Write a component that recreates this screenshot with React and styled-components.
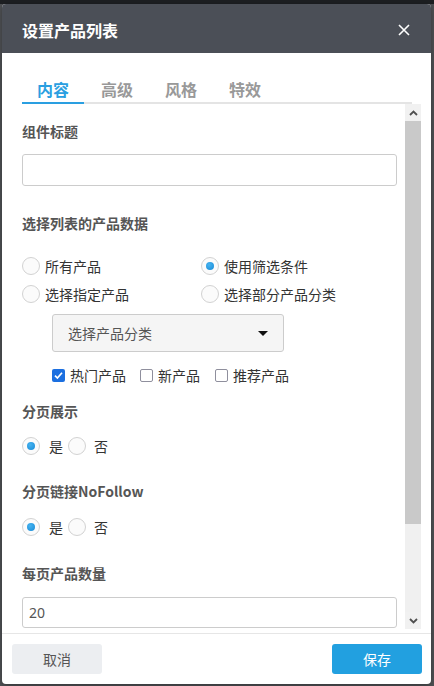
import React from "react";
import styled, { createGlobalStyle } from "styled-components";

const GlobalStyle = createGlobalStyle`
  * { box-sizing: border-box; }
  body {
    margin: 0;
    background: #4d4f52;
    font-family: "Noto Sans CJK SC", "Noto Sans", sans-serif;
  }
`;

const Backdrop = styled.div`
  width: 434px;
  height: 686px;
  padding: 4px 3px 2px 2px;
  background: linear-gradient(#1d1f22 0 4px, #505255 4px);
`;

const Modal = styled.div`
  width: 429px;
  height: 680px;
  background: #fff;
  border-radius: 4px;
  overflow: hidden;
  display: flex;
  flex-direction: column;
  box-shadow: 0 2px 6px rgba(0, 0, 0, 0.35);
`;

const Header = styled.div`
  height: 49px;
  flex: none;
  background: #4b4f57;
  display: flex;
  align-items: center;
  justify-content: space-between;
  padding: 2px 21px 0 20px;
`;

const Title = styled.h2`
  margin: 0;
  color: #fff;
  font-size: 16px;
  font-weight: 700;
  line-height: 22px;
`;

const CloseButton = styled.button`
  border: 0;
  padding: 0;
  background: none;
  width: 12px;
  height: 12px;
  display: flex;
  cursor: pointer;
`;

const TabList = styled.div`
  flex: none;
  display: flex;
  margin: 25px 19px 0 20px;
  border-bottom: 2px solid #e4e4e4;
`;

const Tab = styled.div`
  width: 62px;
  margin-right: 2px;
  text-align: center;
  font-size: 16px;
  font-weight: 700;
  line-height: 22px;
  padding-bottom: 2px;
  margin-bottom: -2px;
  color: ${(p) => (p.$active ? "#2a9fe1" : "#999")};
  border-bottom: 2px solid ${(p) => (p.$active ? "#2a9fe1" : "transparent")};
`;

const Body = styled.div`
  flex: 1;
  min-height: 0;
  display: flex;
  padding: 0 10px 0 20px;
  overflow: hidden;
`;

const Content = styled.div`
  flex: 1;
  margin-right: 8px;
  padding-top: 17px;
  overflow: hidden;
`;

const Scrollbar = styled.div`
  width: 16px;
  flex: none;
  display: flex;
  flex-direction: column;
  margin-bottom: 4px;
  background: #f0f0f0;
`;

const ScrollButton = styled.div`
  height: 17px;
  flex: none;
  display: flex;
  align-items: center;
  justify-content: center;
  background: #f1f1f1;
`;

const Thumb = styled.div`
  height: 403px;
  flex: none;
  background: #c9c9c9;
`;

const Track = styled.div`
  flex: 1;
`;

const Label = styled.div`
  margin-top: ${(p) => p.$mt || 0}px;
  font-size: 14px;
  font-weight: 700;
  line-height: 20px;
  color: #555;
`;

const TextInput = styled.div`
  margin-top: ${(p) => p.$mt || 0}px;
  height: ${(p) => p.$h || 32}px;
  border: 1px solid #ccc;
  border-radius: 3px;
  padding: 0 6px;
  display: flex;
  align-items: center;
  font-family: "Noto Sans", "Noto Sans CJK SC", sans-serif;
  font-size: 14px;
  color: #555;
`;

const RadioGrid = styled.div`
  margin-top: ${(p) => p.$mt || 0}px;
  display: grid;
  grid-template-columns: 179px 1fr;
  grid-auto-rows: 28px;
`;

const RadioRow = styled.div`
  margin-top: ${(p) => p.$mt || 0}px;
  height: 28px;
  display: flex;
  align-items: center;
`;

const Option = styled.label`
  display: flex;
  align-items: center;
  font-size: 14px;
  color: #333;
  margin-right: ${(p) => p.$mr || 0}px;
`;

const Radio = styled.span`
  width: 18px;
  height: 18px;
  flex: none;
  border-radius: 50%;
  border: 1px solid #d2d2d2;
  background: #fbfbfb;
  margin-right: ${(p) => p.$gap || 5}px;
  display: flex;
  align-items: center;
  justify-content: center;
  &::after {
    content: "";
    display: ${(p) => (p.$checked ? "block" : "none")};
    width: 8px;
    height: 8px;
    border-radius: 50%;
    background: radial-gradient(circle at 40% 35%, #45b3f0, #1789d6);
  }
`;

const Select = styled.div`
  margin: 6px 0 0 30px;
  width: 232px;
  height: 38px;
  border: 1px solid #ccc;
  border-radius: 3px;
  background: #f5f5f5;
  display: flex;
  align-items: center;
  justify-content: space-between;
  padding: 0 15px 0 15px;
  font-size: 14px;
  color: #555;
`;

const Caret = styled.span`
  width: 0;
  height: 0;
  border-left: 5px solid transparent;
  border-right: 5px solid transparent;
  border-top: 5px solid #111;
`;

const CheckRow = styled.div`
  margin: 13px 0 0 30px;
  height: 20px;
  display: flex;
  align-items: center;
`;

const Box = styled.span`
  width: 13px;
  height: 13px;
  flex: none;
  border-radius: 2px;
  margin-right: 5px;
  display: flex;
  align-items: center;
  justify-content: center;
  border: ${(p) => (p.$checked ? "none" : "1.5px solid #8f8f9d")};
  background: ${(p) => (p.$checked ? "#1b6fe0" : "#fff")};
`;

const Footer = styled.div`
  flex: none;
  border-top: 1px solid #e6e6e6;
  padding: 10px 9px 10px 10px;
  display: flex;
  justify-content: space-between;
`;

const Button = styled.button`
  width: 90px;
  height: 30px;
  border: 0;
  border-radius: 3px;
  font-family: inherit;
  font-size: 14px;
  background: ${(p) => (p.$primary ? "#22a0e0" : "#eceef1")};
  color: ${(p) => (p.$primary ? "#fff" : "#555")};
  cursor: pointer;
`;

const Chevron = ({ up }) => (
  <svg width="9" height="6" viewBox="0 0 9 6">
    <path
      d={up ? "M1 5 L4.5 1.5 L8 5" : "M1 1 L4.5 4.5 L8 1"}
      fill="none"
      stroke="#505050"
      strokeWidth="1.8"
    />
  </svg>
);

const Check = () => (
  <svg width="11" height="11" viewBox="0 0 11 11">
    <path d="M2 5.6 L4.4 8 L9 2.8" fill="none" stroke="#fff" strokeWidth="1.7" />
  </svg>
);

const YesNo = ({ mt }) => (
  <RadioRow $mt={mt}>
    <Option>
      <Radio $checked $gap={9} />是
    </Option>
    <Option>
      <Radio $gap={8} style={{ marginLeft: 5 }} />否
    </Option>
  </RadioRow>
);

export default function App() {
  const tabs = ["内容", "高级", "风格", "特效"];
  return (
    <>
      <GlobalStyle />
      <Backdrop>
        <Modal>
          <Header>
            <Title>设置产品列表</Title>
            <CloseButton aria-label="关闭">
              <svg width="12" height="12" viewBox="0 0 12 12">
                <path d="M1 1 L11 11 M11 1 L1 11" stroke="#fff" strokeWidth="1.6" />
              </svg>
            </CloseButton>
          </Header>
          <TabList>
            {tabs.map((t, i) => (
              <Tab key={t} $active={i === 0}>
                {t}
              </Tab>
            ))}
          </TabList>
          <Body>
            <Content>
              <Label>组件标题</Label>
              <TextInput $mt={13} />
              <Label $mt={27}>选择列表的产品数据</Label>
              <RadioGrid $mt={19}>
                <Option>
                  <Radio />所有产品
                </Option>
                <Option>
                  <Radio $checked />使用筛选条件
                </Option>
                <Option>
                  <Radio />选择指定产品
                </Option>
                <Option>
                  <Radio />选择部分产品分类
                </Option>
              </RadioGrid>
              <Select>
                选择产品分类
                <Caret />
              </Select>
              <CheckRow>
                <Option $mr={14}>
                  <Box $checked>
                    <Check />
                  </Box>
                  热门产品
                </Option>
                <Option $mr={15}>
                  <Box />新产品
                </Option>
                <Option>
                  <Box />推荐产品
                </Option>
              </CheckRow>
              <Label $mt={16}>分页展示</Label>
              <YesNo mt={11} />
              <Label $mt={21}>分页链接NoFollow</Label>
              <YesNo mt={12} />
              <Label $mt={22}>每页产品数量</Label>
              <TextInput $mt={14} $h={31}>20</TextInput>
            </Content>
            <Scrollbar>
              <ScrollButton>
                <Chevron up />
              </ScrollButton>
              <Thumb />
              <Track />
              <ScrollButton>
                <Chevron />
              </ScrollButton>
            </Scrollbar>
          </Body>
          <Footer>
            <Button>取消</Button>
            <Button $primary>保存</Button>
          </Footer>
        </Modal>
      </Backdrop>
    </>
  );
}
